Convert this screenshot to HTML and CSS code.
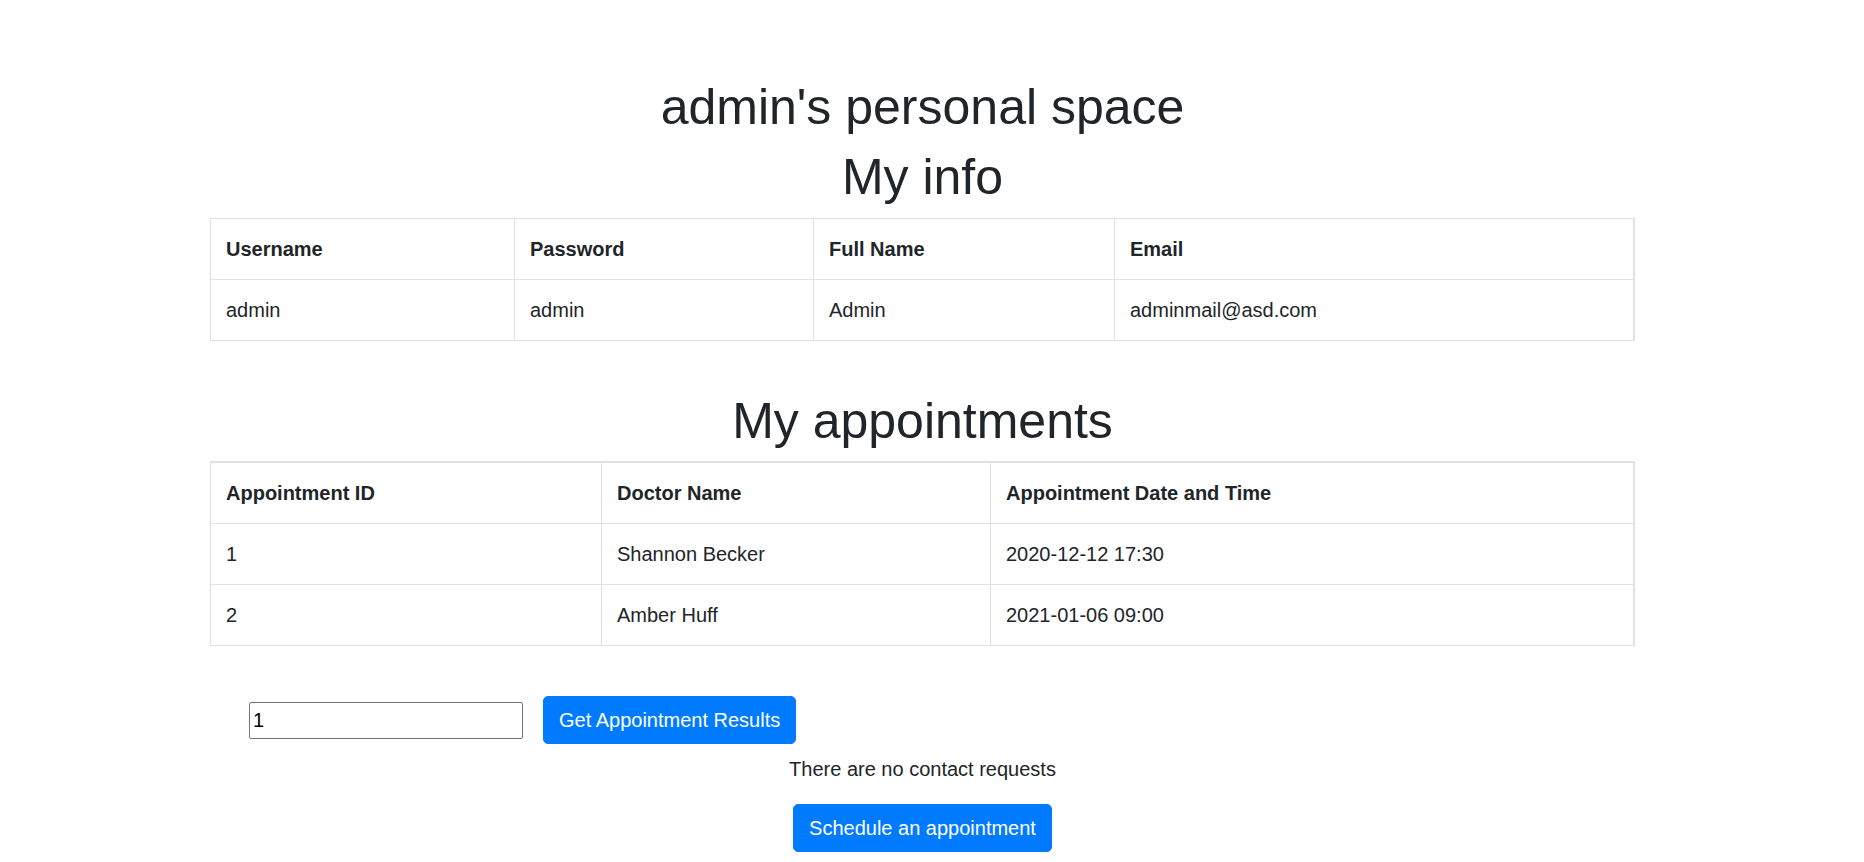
FILE: index.html
```html
<!DOCTYPE html>
<html lang="en">
<head>
<meta charset="utf-8">
<title>admin's personal space</title>
<link rel="stylesheet" href="styles.css">
</head>
<body>
<main class="page">
  <h1 class="heading">admin's personal space</h1>
  <h1 class="heading info-title">My info</h1>
  <table class="grid info">
    <colgroup>
      <col class="w-user"><col class="w-pass"><col class="w-name"><col>
    </colgroup>
    <thead>
      <tr><th>Username</th><th>Password</th><th>Full Name</th><th>Email</th></tr>
    </thead>
    <tbody>
      <tr><td>admin</td><td>admin</td><td>Admin</td><td>adminmail@asd.com</td></tr>
    </tbody>
  </table>

  <h1 class="heading section">My appointments</h1>
  <table class="grid appts">
    <colgroup>
      <col class="w-id"><col class="w-doc"><col>
    </colgroup>
    <thead>
      <tr><th>Appointment ID</th><th>Doctor Name</th><th>Appointment Date and Time</th></tr>
    </thead>
    <tbody>
      <tr><td>1</td><td>Shannon Becker</td><td>2020-12-12 17:30</td></tr>
      <tr><td>2</td><td>Amber Huff</td><td>2021-01-06 09:00</td></tr>
    </tbody>
  </table>

  <form class="results-form">
    <input class="id-input" type="text" value="1">
    <button class="btn" type="button">Get Appointment Results</button>
  </form>
  <p class="note">There are no contact requests</p>
  <div class="actions">
    <button class="btn" type="button">Schedule an appointment</button>
  </div>
</main>
</body>
</html>
```
FILE: styles.css
```css
html, body {
  margin: 0;
  padding: 0;
  background: #fff;
}

body {
  font-family: "Liberation Sans", Arial, sans-serif;
  font-size: 20px;
  line-height: 30px;
  color: #212529;
}

.page {
  width: 1425px;
  margin: 0 0 0 210px;
  padding-top: 77px;
}

.heading {
  font-size: 50px;
  line-height: 60px;
  font-weight: 400;
  text-align: center;
  margin: 0 0 10px;
}

.heading.info-title {
  margin-bottom: 11px;
}

.heading.section {
  margin-top: 50px;
}

.grid {
  width: 1425px;
  border-collapse: collapse;
  table-layout: fixed;
  margin: 0;
}

.grid th,
.grid td {
  border: 1px solid #dee2e6;
  padding: 15px 15px;
  text-align: left;
  vertical-align: top;
  line-height: 30px;
}

.grid th {
  font-weight: 700;
}

.grid th:last-child,
.grid td:last-child {
  border-right-width: 2px;
}

.appts th {
  border-top-width: 2px;
}

.w-user { width: 304px; }
.w-pass { width: 299px; }
.w-name { width: 301px; }

.w-id { width: 391px; }
.w-doc { width: 389px; }

.results-form {
  display: flex;
  align-items: center;
  gap: 20px;
  margin: 50px 0 0;
  padding-left: 39px;
}

.id-input {
  box-sizing: border-box;
  width: 274px;
  height: 37px;
  margin: 0;
  padding: 2px 3px;
  border: 1px solid #767676;
  border-radius: 2px;
  font-family: inherit;
  font-size: 20px;
  line-height: 30px;
  color: #000;
  background: #fff;
}

.btn {
  display: inline-block;
  margin: 0;
  padding: 8px 15px;
  border: 1px solid #007bff;
  border-radius: 5px;
  background: #007bff;
  color: #fff;
  font-family: inherit;
  font-size: 20px;
  line-height: 30px;
  font-weight: 400;
  cursor: pointer;
}

.note {
  text-align: center;
  margin: 10px 0 20px;
}

.actions {
  display: flex;
  justify-content: center;
}
```
